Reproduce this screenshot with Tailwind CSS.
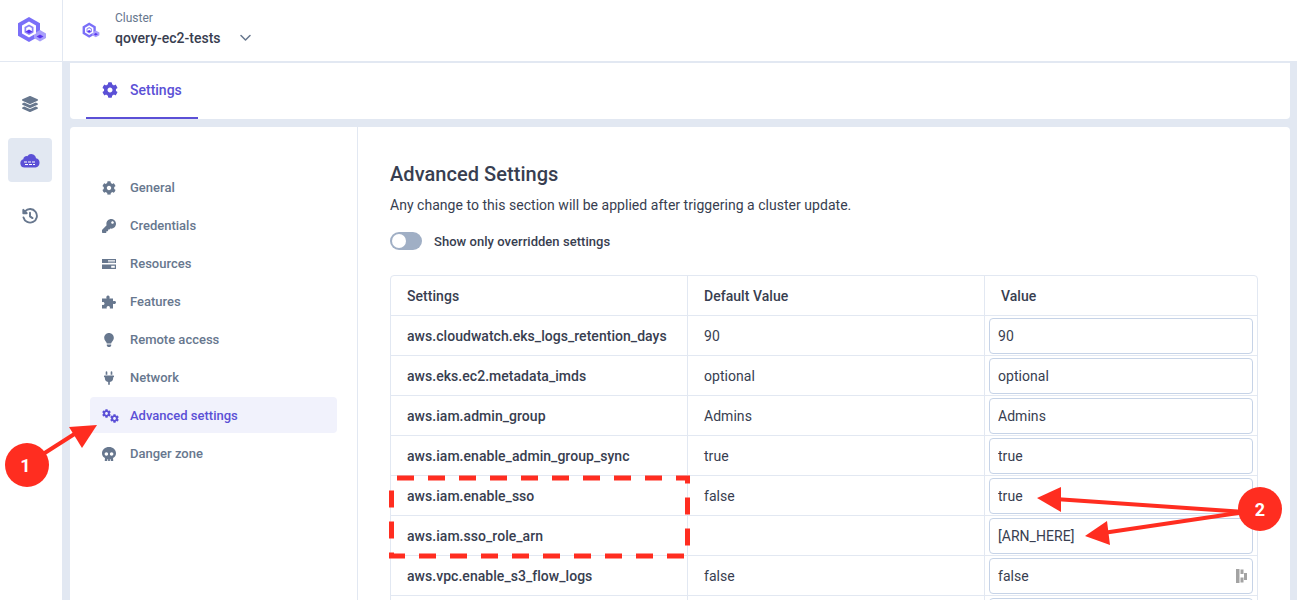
<!DOCTYPE html>
<html lang="en">
<head>
    <meta charset="UTF-8">
    <title>Advanced Settings</title>
    <script src="https://cdn.jsdelivr.net/npm/@tailwindcss/browser@4"></script>
</head>
<body class="relative h-[600px] overflow-hidden bg-white font-['Roboto',sans-serif] text-[#383e50]">

<!-- Shared icons -->
<svg class="hidden">
    <symbol id="gear" viewBox="0 0 512 512">
        <path fill="currentColor" d="M487.4 315.7l-42.6-24.6c4.3-23.2 4.3-47 0-70.2l42.6-24.6c4.9-2.8 7.1-8.6 5.5-14-11.1-35.6-30-67.8-54.7-94.6-3.8-4.1-10-5.1-14.8-2.3L380.8 110c-17.9-15.4-38.5-27.3-60.8-35.1V25.8c0-5.6-3.9-10.5-9.4-11.7-36.7-8.2-74.3-7.8-109.2 0-5.5 1.2-9.4 6.1-9.4 11.7V75c-22.2 7.9-42.8 19.8-60.8 35.1L88.7 85.5c-4.9-2.8-11-1.9-14.8 2.3-24.7 26.7-43.6 58.9-54.7 94.6-1.7 5.4.6 11.2 5.5 14L67.3 221c-4.3 23.2-4.3 47 0 70.2l-42.6 24.6c-4.9 2.8-7.1 8.6-5.5 14 11.1 35.6 30 67.8 54.7 94.6 3.8 4.1 10 5.1 14.8 2.3l42.6-24.6c17.9 15.4 38.5 27.3 60.8 35.1v49.2c0 5.6 3.9 10.5 9.4 11.7 36.7 8.2 74.3 7.8 109.2 0 5.5-1.2 9.4-6.1 9.4-11.7v-49.2c22.2-7.9 42.8-19.8 60.8-35.1l42.6 24.6c4.9 2.8 11 1.9 14.8-2.3 24.7-26.7 43.6-58.9 54.7-94.6 1.5-5.5-.7-11.3-5.6-14.1zM256 336c-44.1 0-80-35.9-80-80s35.9-80 80-80 80 35.9 80 80-35.9 80-80 80z"/>
    </symbol>
    <symbol id="logo" viewBox="0 0 30 30">
        <path fill="#7a6ff8" d="M12 1l11 6.3v12.4l-11 6.4L1 19.700V7.300z"/>
        <path fill="#a89ffa" d="M23 14l6 3.500v4.500l-6 3.500-6-3.500v-4.500z"/>
        <path fill="#fff" d="M12 5.500l7 4v8l-7 4-7-4v-8z"/>
        <path fill="#8d84f7" d="M12 8.500l4.500 2.600v5.300l-4.500 2.600-4.500-2.600v-5.300z"/>
        <path fill="#fff" d="M12 10.500l2.800 1.600v3.300l-2.800 1.600-2.800-1.600v-3.300z"/>
        <path fill="#5a35f0" d="M12 13.500l3.500 2-3.500 2-3.500-2zM23 18.500l3.500 2-3.500 2-3.500-2z"/>
    </symbol>
</svg>

<!-- Top bar -->
<header class="flex h-[62px] border-b border-[#e2e8f2]">
    <div class="flex w-[63px] shrink-0 items-center justify-center border-r border-[#e2e8f2]">
        <svg class="ml-[1px] h-[30px] w-[30px]"><use href="#logo"/></svg>
    </div>
    <div class="flex items-center pl-[19px]">
        <svg class="h-[18px] w-[18px]"><use href="#logo"/></svg>
        <div class="mb-[3px] ml-[15px]">
            <div class="text-[12px] leading-[16px] text-[#67778e]">Cluster</div>
            <div class="mt-[2px] flex items-center text-[14px] leading-[20px] font-medium">
                qovery-ec2-tests
                <svg class="ml-[19px] h-[10px] w-[11px] text-[#67778e]" viewBox="0 0 11 10" fill="none" stroke="currentColor" stroke-width="1.500" stroke-linecap="round" stroke-linejoin="round"><path d="M1 2.500l4.500 4.500 4.500-4.500"/></svg>
            </div>
        </div>
    </div>
</header>

<div class="flex h-[538px] overflow-hidden">
    <!-- Icon rail -->
    <nav class="flex w-[62px] shrink-0 flex-col items-center pt-[34px] pr-[2px]">
        <svg class="h-4 w-4 text-[#67778e]" viewBox="0 0 512 512"><path fill="currentColor" d="M12.410 148.020l232.940 105.670c6.800 3.090 14.490 3.090 21.290 0l232.940-105.670c16.550-7.510 16.550-32.520 0-40.030L266.650 2.310a25.607 25.607 0 0 0-21.290 0L12.410 107.980c-16.550 7.510-16.550 32.530 0 40.040zm487.180 88.280l-58.090-26.330-161.640 73.270c-7.560 3.430-15.590 5.170-23.860 5.170s-16.290-1.740-23.860-5.170L70.510 209.970l-58.100 26.330c-16.550 7.500-16.550 32.500 0 40l232.940 105.590c6.800 3.080 14.490 3.080 21.290 0L499.590 276.300c16.550-7.500 16.550-32.500 0-40zm0 127.800l-57.870-26.230-161.860 73.370c-7.560 3.430-15.590 5.170-23.860 5.170s-16.290-1.740-23.860-5.170L70.290 337.870 12.410 364.100c-16.550 7.500-16.550 32.500 0 40l232.940 105.590c6.800 3.080 14.490 3.080 21.290 0L499.590 404.100c16.550-7.500 16.550-32.500 0-40z"/></svg>
        <div class="mt-[26px] flex h-[44px] w-[44px] items-center justify-center rounded-[4px] bg-[#e2e8f2]">
            <svg class="h-[16px] w-[20px]" viewBox="0 0 20 16"><path fill="#5b50d6" d="M4.500 15.500a4.200 4.200 0 0 1-1.200-8.200 3.300 3.300 0 0 1 4-3.100A4.800 4.800 0 0 1 16 6.300a4.700 4.700 0 0 1-.5 9.200z"/><path stroke="#fff" stroke-width="1" stroke-dasharray="3 1" d="M4 10h12M5 12.500h10"/></svg>
        </div>
        <svg class="mt-[26px] h-4 w-4 text-[#67778e]" viewBox="0 0 16 16" fill="none" stroke="currentColor" stroke-width="1.900" stroke-linecap="round" stroke-linejoin="round"><path d="M3 3.300A6.800 6.800 0 1 1 1.500 9.500"/><path fill="currentColor" d="M1.300 1.800v3.400h3.400z"/><path d="M8 4.800v3.600l2.500 1.700"/></svg>
    </nav>

    <main class="flex min-w-0 flex-1 flex-col gap-2 bg-[#e2e8f2] pt-px pr-[7px] pl-2">
        <!-- Tab card -->
        <div class="flex h-[56px] shrink-0 rounded-b-[4px] bg-white pl-4">
            <div class="flex h-[56px] w-[112px] items-center border-b-2 border-[#5b50d6] pl-4 text-[#5b50d6]">
                <svg class="h-4 w-4"><use href="#gear"/></svg>
                <span class="ml-3 text-[14px] font-medium">Settings</span>
            </div>
        </div>

        <div class="flex min-h-0 flex-1 overflow-hidden rounded-t-[4px] bg-white">
            <!-- Settings menu -->
            <aside class="w-[288px] shrink-0 border-r border-[#e2e8f2] px-5 pt-[42px] text-[13px] font-medium text-[#67778e]">
                <ul class="flex flex-col gap-[2px]">
                    <li class="flex h-[36px] items-center rounded-[4px] px-3 pt-[2px]">
                        <span class="flex w-[28px] shrink-0"><svg class="h-[14px] w-[14px]"><use href="#gear"/></svg></span>General
                    </li>
                    <li class="flex h-[36px] items-center rounded-[4px] px-3 pt-[2px]">
                        <span class="flex w-[28px] shrink-0"><svg class="h-[14px] w-[14px]" viewBox="0 0 512 512"><path fill="currentColor" d="M512 176.001C512 273.203 433.202 352 336 352c-11.220 0-22.190-1.062-32.827-3.069l-24.012 27.014A23.999 23.999 0 0 1 261.223 384H224v40c0 13.255-10.745 24-24 24h-40v40c0 13.255-10.745 24-24 24H24c-13.255 0-24-10.745-24-24v-78.059c0-6.365 2.529-12.470 7.029-16.971l161.802-161.802C163.108 213.814 160 195.271 160 176 160 78.798 238.797.001 335.999 0 433.488-.001 512 78.511 512 176.001zM336 128c0 26.510 21.490 48 48 48s48-21.490 48-48-21.490-48-48-48-48 21.490-48 48z"/></svg></span>Credentials
                    </li>
                    <li class="flex h-[36px] items-center rounded-[4px] px-3 pt-[2px]">
                        <span class="flex w-[28px] shrink-0"><svg class="h-[14px] w-[14px]" viewBox="0 0 14 14"><path fill="currentColor" d="M0 2h5v4H0zM5 2h9v4H5zM0 7.500h8v4.500H0zM8 7.500h6v4.500H8z"/><path fill="#fff" d="M6 3h7v.8H6zM6 4.600h7v.6H6zM9.200 8.800h3.600v2H9.200z"/></svg></span>Resources
                    </li>
                    <li class="flex h-[36px] items-center rounded-[4px] px-3 pt-[2px]">
                        <span class="flex w-[28px] shrink-0"><svg class="h-[14px] w-[14px]" viewBox="0 0 14 14"><path fill="currentColor" d="M0 3.500H4.600C3.900 2 4.600.5 6 .5S8.100 2 7.400 3.500H11V6.300C12.300 5.700 14 6.100 14 7.500S12.300 9.300 11 8.700V13.500H7.800C8.300 12.200 7.600 11 6.300 11S4.300 12.200 4.800 13.500H0V9.800C1.200 10.400 2.500 9.800 2.500 8.500S1.200 6.600 0 7.200z"/></svg></span>Features
                    </li>
                    <li class="flex h-[36px] items-center rounded-[4px] px-3 pt-[2px]">
                        <span class="flex w-[28px] shrink-0 pl-[2px]"><svg class="h-[14px] w-[10px]" viewBox="0 0 352 512"><path fill="currentColor" d="M96.060 454.350c.010 6.290 1.870 12.450 5.360 17.690l17.090 25.690a31.990 31.990 0 0 0 26.640 14.280h61.710a31.990 31.990 0 0 0 26.640-14.280l17.090-25.690a31.989 31.989 0 0 0 5.360-17.690l.040-38.350H96.010l.050 38.350zM0 176c0 44.370 16.450 84.850 43.560 115.780 16.520 18.850 42.360 58.230 52.210 91.450.040.260.070.520.110.780h160.240c.040-.260.070-.510.110-.780 9.850-33.220 35.690-72.600 52.210-91.450C335.550 260.850 352 220.370 352 176 352 78.610 272.910-.300 175.450 0 73.440.310 0 82.970 0 176z"/></svg></span>Remote access
                    </li>
                    <li class="flex h-[36px] items-center rounded-[4px] px-3 pt-[2px]">
                        <span class="flex w-[28px] shrink-0 pl-[2px]"><svg class="h-[14px] w-[10px]" viewBox="0 0 384 512"><path fill="currentColor" d="M320 32a32 32 0 0 0-64 0v96h64zm48 128H16a16 16 0 0 0-16 16v32a16 16 0 0 0 16 16h16v32a160.070 160.070 0 0 0 128 156.800V512h64v-99.200A160.070 160.070 0 0 0 352 256v-32h16a16 16 0 0 0 16-16v-32a16 16 0 0 0-16-16zM128 32a32 32 0 0 0-64 0v96h64z"/></svg></span>Network
                    </li>
                    <li class="flex h-[36px] items-center rounded-[4px] bg-[#f1f2fc] px-3 pt-[2px] text-[#5b50d6]">
                        <span class="relative flex h-[14px] w-[28px] shrink-0">
                            <svg class="h-[9px] w-[9px]"><use href="#gear"/></svg>
                            <svg class="mt-[5px] -ml-[1px] h-[9px] w-[9px]"><use href="#gear"/></svg>
                        </span>Advanced settings
                    </li>
                    <li class="flex h-[36px] items-center rounded-[4px] px-3 pt-[2px]">
                        <span class="flex w-[28px] shrink-0"><svg class="h-[14px] w-[14px]" viewBox="0 0 512 512"><path fill="currentColor" d="M256 0C114.600 0 0 100.300 0 224c0 70.100 36.900 132.600 94.500 173.700 9.600 6.900 15.200 18.100 13.500 29.900l-9.400 66.200c-1.400 9.600 6 18.200 15.700 18.200H192v-56c0-4.400 3.600-8 8-8h16c4.400 0 8 3.600 8 8v56h64v-56c0-4.400 3.600-8 8-8h16c4.400 0 8 3.600 8 8v56h77.700c9.700 0 17.100-8.600 15.700-18.200l-9.400-66.200c-1.700-11.700 3.800-23 13.500-29.900C475.100 356.600 512 294.100 512 224 512 100.300 397.400 0 256 0zm-96 320c-35.300 0-64-28.700-64-64s28.700-64 64-64 64 28.700 64 64-28.700 64-64 64zm192 0c-35.300 0-64-28.700-64-64s28.700-64 64-64 64 28.700 64 64-28.700 64-64 64z"/></svg></span>Danger zone
                    </li>
                </ul>
            </aside>

            <!-- Advanced settings -->
            <section class="min-w-0 flex-1 pt-[34px] pl-8">
                <h1 class="text-[20px] leading-[26px] font-medium tracking-[0.05px]">Advanced Settings</h1>
                <p class="mt-[9px] text-[14px] leading-[18px] tracking-[0.03px]">Any change to this section will be applied after triggering a cluster update.</p>
                <div class="mt-[18px] flex h-[18px] items-center">
                    <span class="flex h-[18px] w-[32px] items-center rounded-full bg-[#a0afc5] pl-[2px]"><span class="h-[14px] w-[14px] rounded-full bg-white"></span></span>
                    <span class="ml-3 pt-[2px] text-[13px] font-medium tracking-[0.04px]">Show only overridden settings</span>
                </div>

                <div class="mt-[25px] w-[868px] rounded-t-[4px] border border-[#e2e8f2] text-[14px] font-medium tracking-[0.04px]">
                    <div class="grid h-[40px] grid-cols-[297px_297px_272px] border-b border-[#e2e8f2]">
                        <div class="flex items-center border-r border-[#e2e8f2] pt-[2px] pl-4">Settings</div>
                        <div class="flex items-center border-r border-[#e2e8f2] pt-[2px] pl-4">Default Value</div>
                        <div class="flex items-center pt-[2px] pl-4">Value</div>
                    </div>
                    <div class="grid h-[40px] grid-cols-[297px_297px_272px] border-b border-[#e2e8f2]">
                        <div class="flex items-center border-r border-[#e2e8f2] pt-[2px] pl-4">aws.cloudwatch.eks_logs_retention_days</div>
                        <div class="flex items-center border-r border-[#e2e8f2] pt-[2px] pl-4 font-normal">90</div>
                        <div class="flex items-center pr-1 pl-1"><input class="h-[36px] w-full rounded-[4px] border border-[#c6d3e7] px-2 font-normal" value="90" readonly></div>
                    </div>
                    <div class="grid h-[40px] grid-cols-[297px_297px_272px] border-b border-[#e2e8f2]">
                        <div class="flex items-center border-r border-[#e2e8f2] pt-[2px] pl-4">aws.eks.ec2.metadata_imds</div>
                        <div class="flex items-center border-r border-[#e2e8f2] pt-[2px] pl-4 font-normal">optional</div>
                        <div class="flex items-center pr-1 pl-1"><input class="h-[36px] w-full rounded-[4px] border border-[#c6d3e7] px-2 font-normal" value="optional" readonly></div>
                    </div>
                    <div class="grid h-[40px] grid-cols-[297px_297px_272px] border-b border-[#e2e8f2]">
                        <div class="flex items-center border-r border-[#e2e8f2] pt-[2px] pl-4">aws.iam.admin_group</div>
                        <div class="flex items-center border-r border-[#e2e8f2] pt-[2px] pl-4 font-normal">Admins</div>
                        <div class="flex items-center pr-1 pl-1"><input class="h-[36px] w-full rounded-[4px] border border-[#c6d3e7] px-2 font-normal" value="Admins" readonly></div>
                    </div>
                    <div class="grid h-[40px] grid-cols-[297px_297px_272px] border-b border-[#e2e8f2]">
                        <div class="flex items-center border-r border-[#e2e8f2] pt-[2px] pl-4">aws.iam.enable_admin_group_sync</div>
                        <div class="flex items-center border-r border-[#e2e8f2] pt-[2px] pl-4 font-normal">true</div>
                        <div class="flex items-center pr-1 pl-1"><input class="h-[36px] w-full rounded-[4px] border border-[#c6d3e7] px-2 font-normal" value="true" readonly></div>
                    </div>
                    <div class="grid h-[40px] grid-cols-[297px_297px_272px] border-b border-[#e2e8f2]">
                        <div class="flex items-center border-r border-[#e2e8f2] pt-[2px] pl-4">aws.iam.enable_sso</div>
                        <div class="flex items-center border-r border-[#e2e8f2] pt-[2px] pl-4 font-normal">false</div>
                        <div class="flex items-center pr-1 pl-1"><input class="h-[36px] w-full rounded-[4px] border border-[#c6d3e7] px-2 font-normal" value="true" readonly></div>
                    </div>
                    <div class="grid h-[40px] grid-cols-[297px_297px_272px] border-b border-[#e2e8f2]">
                        <div class="flex items-center border-r border-[#e2e8f2] pt-[2px] pl-4">aws.iam.sso_role_arn</div>
                        <div class="flex items-center border-r border-[#e2e8f2] pt-[2px] pl-4 font-normal"></div>
                        <div class="flex items-center pr-1 pl-1"><input class="h-[36px] w-full rounded-[4px] border border-[#c6d3e7] px-2 font-normal" value="[ARN_HERE]" readonly></div>
                    </div>
                    <div class="grid h-[40px] grid-cols-[297px_297px_272px] border-b border-[#e2e8f2]">
                        <div class="flex items-center border-r border-[#e2e8f2] pt-[2px] pl-4">aws.vpc.enable_s3_flow_logs</div>
                        <div class="flex items-center border-r border-[#e2e8f2] pt-[2px] pl-4 font-normal">false</div>
                        <div class="relative flex items-center pr-1 pl-1">
                            <input class="h-[36px] w-full rounded-[4px] border border-[#c6d3e7] px-2 font-normal" value="false" readonly>
                            <svg class="absolute top-[13px] right-[10px] h-[14px] w-[11px] text-[#a3a3a3]" viewBox="0 0 11 14"><path fill="currentColor" d="M0 0h3.500v14H0zM4.500 .5h3v4.500h-3zM4.500 8.500h3v5h-3zM8 4h3v7H8z"/></svg>
                        </div>
                    </div>
                    <div class="grid h-[40px] grid-cols-[297px_297px_272px]">
                        <div class="border-r border-[#e2e8f2]"></div>
                        <div class="border-r border-[#e2e8f2]"></div>
                        <div class="pt-[2px] pr-1 pl-1"><div class="h-[36px] rounded-[4px] border border-[#c6d3e7]"></div></div>
                    </div>
                </div>
            </section>
        </div>
    </main>
</div>

<!-- Red annotations drawn over the screenshot -->
<svg class="pointer-events-none absolute top-0 left-0 h-[600px] w-[1297px]" viewBox="0 0 1297 600">
    <path d="M397 478H687.500V556H391.500V478" fill="none" stroke="#ff2d20" stroke-width="5" stroke-dasharray="17 14"/>
    <path d="M40 456L76 433" stroke="#ff2d20" stroke-width="4"/>
    <path d="M97 425L69 427L82 448z" fill="#ff2d20"/>
    <circle cx="27" cy="465" r="22" fill="#ff2d20"/>
    <path d="M1245 512L1055 499" stroke="#ff2d20" stroke-width="4"/>
    <path d="M1037 498L1061 487L1061 512z" fill="#ff2d20"/>
    <path d="M1245 512L1103 533" stroke="#ff2d20" stroke-width="4"/>
    <path d="M1085 536L1107 521L1110 545z" fill="#ff2d20"/>
    <circle cx="1260" cy="509" r="22" fill="#ff2d20"/>
    <text x="25.500" y="472" text-anchor="middle" font-family="Roboto" font-weight="700" font-size="18" fill="#fff">1</text>
    <text x="1260" y="516" text-anchor="middle" font-family="Roboto" font-weight="700" font-size="18" fill="#fff">2</text>
</svg>
</body>
</html>
